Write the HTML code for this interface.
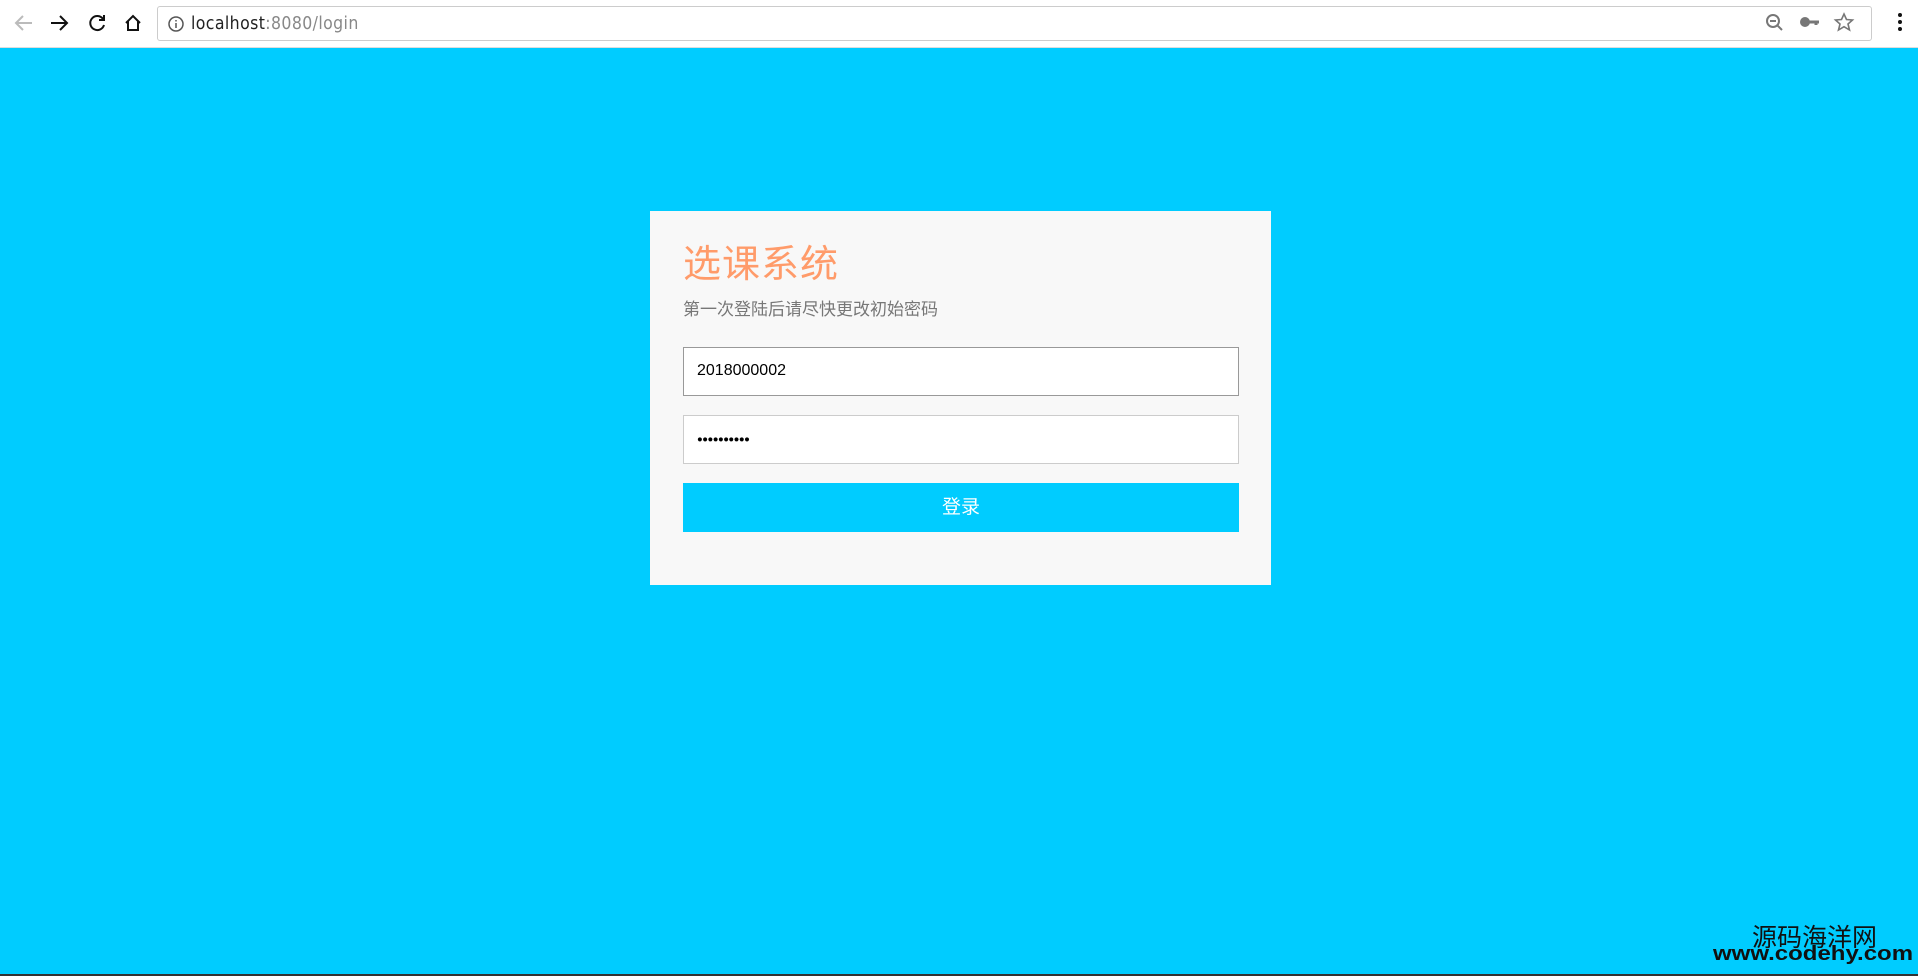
<!DOCTYPE html>
<html><head><meta charset="utf-8"><style>
*{margin:0;padding:0;box-sizing:border-box}
html,body{width:1918px;height:976px;overflow:hidden;background:#00ccff;font-family:"Liberation Sans","Noto Sans CJK SC",sans-serif}
.bar{position:absolute;left:0;top:0;width:1918px;height:48px;background:#fff;border-bottom:1px solid #ddd}
.addr{position:absolute;left:157px;top:6px;width:1715px;height:35px;border:1px solid #ccc;border-radius:3px;background:#fff}
.url{position:absolute;left:33px;top:7px;font-size:17.5px;letter-spacing:0.4px;color:#222;font-family:"DejaVu Sans Condensed","Liberation Sans",sans-serif}
.url span{color:#888}
.card{position:absolute;left:650px;top:211px;width:621px;height:374px;background:#f8f8f8}
h1{position:absolute;left:33px;top:22px;font-size:38px;font-weight:normal;color:#ff9b6a;letter-spacing:1px}
.sub{position:absolute;left:33px;top:84px;font-size:17px;color:#777}
.inp{position:absolute;left:33px;width:556px;height:49px;background:#fff;font-size:16px;padding:14px 13px;color:#000}
.btn{position:absolute;left:33px;top:272px;width:556px;height:49px;background:#00ccff;color:#fff;font-size:19px;text-align:center;line-height:49px}
.wm{position:absolute;color:#111}
</style></head><body>
<div class="bar">
<svg width="150" height="48" style="position:absolute;left:0;top:0" fill="none" stroke-width="2">
<path d="M32 23H16M23 16l-7 7 7 7" stroke="#bbb"/>
<path d="M51 23h16M60 16l7 7-7 7" stroke="#111"/>
<path d="M103 19a7 7 0 1 0 1 6" stroke="#111"/><path d="M104 15v5h-5" stroke="#111"/>
<path d="M126 23l7-7 7 7M128 21v9h10v-9" stroke="#111"/>
</svg>
<div class="addr">
<svg width="20" height="20" style="position:absolute;left:8px;top:7px"><circle cx="10" cy="10" r="7" fill="none" stroke="#555" stroke-width="1.5"/><path d="M10 9v5M10 6v1.5" stroke="#555" stroke-width="1.5"/></svg>
<div class="url">localhost<span>:8080/login</span></div>
<svg width="110" height="30" style="position:absolute;right:0;top:2px" fill="none" stroke="#777" stroke-width="2">
<circle cx="12" cy="12" r="6"/><path d="M9 12h6M16 16l5 5"/>
<circle cx="44" cy="13" r="4" fill="#777"/><path d="M48 13h10M55 13v3" stroke-width="3"/>
<path d="M83 5l2.5 5.5 6 .5-4.5 4 1.5 6-5.5-3.3-5.5 3.3 1.5-6-4.5-4 6-.5z" stroke-width="1.6"/>
</svg>
</div>
<svg width="10" height="30" style="position:absolute;left:1895px;top:10px"><circle cx="5" cy="5" r="2" fill="#111"/><circle cx="5" cy="12" r="2" fill="#111"/><circle cx="5" cy="19" r="2" fill="#111"/></svg>
</div>
<div class="card">
<h1>选课系统</h1>
<div class="sub">第一次登陆后请尽快更改初始密码</div>
<div class="inp" style="top:136px;border:1px solid #999">2018000002</div>
<div class="inp" style="top:204px;border:1px solid #ccc;font-size:9.5px;padding-top:18px;letter-spacing:-0.5px">●●●●●●●●●●</div>
<div class="btn">登录</div>
</div>
<div class="wm" style="left:1752px;top:918px;font-size:25px;font-family:'Noto Sans CJK SC',sans-serif">源码海洋网</div>
<div class="wm" style="left:1713px;top:942px;font-size:24px;font-weight:bold;font-family:'Liberation Sans',sans-serif;transform:scaleY(0.85);transform-origin:left top">www.codehy.com</div>
<div style="position:absolute;left:0;top:974px;width:1918px;height:2px;background:#333"></div>
</body></html>
